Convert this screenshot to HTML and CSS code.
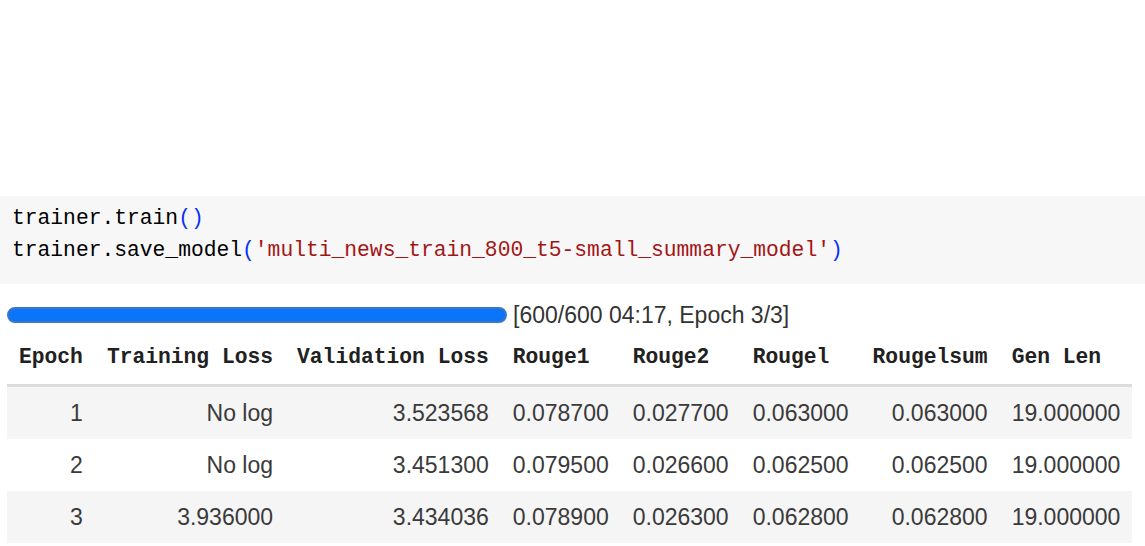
FILE: index.html
```html
<!DOCTYPE html>
<html>
<head>
<meta charset="utf-8">
<link rel="stylesheet" href="styles.css">
</head>
<body>
<div class="spacer"></div>
<div class="code">
<div class="line">trainer.train<span class="p">()</span></div>
<div class="line">trainer.save_model<span class="p">(</span><span class="s">'multi_news_train_800_t5-small_summary_model'</span><span class="p">)</span></div>
</div>
<div class="output">
<div class="progress-row">
<div class="bar"></div>
<span class="status">[600/600 04:17, Epoch 3/3]</span>
</div>
<table class="results">
<thead>
<tr><th>Epoch</th><th>Training Loss</th><th>Validation Loss</th><th>Rouge1</th><th>Rouge2</th><th>Rougel</th><th>Rougelsum</th><th>Gen Len</th></tr>
</thead>
<tbody>
<tr><td>1</td><td>No log</td><td>3.523568</td><td>0.078700</td><td>0.027700</td><td>0.063000</td><td>0.063000</td><td>19.000000</td></tr>
<tr><td>2</td><td>No log</td><td>3.451300</td><td>0.079500</td><td>0.026600</td><td>0.062500</td><td>0.062500</td><td>19.000000</td></tr>
<tr><td>3</td><td>3.936000</td><td>3.434036</td><td>0.078900</td><td>0.026300</td><td>0.062800</td><td>0.062800</td><td>19.000000</td></tr>
</tbody>
</table>
</div>
</body>
</html>
```
FILE: styles.css
```css
html, body {
  margin: 0;
  padding: 0;
  background: #ffffff;
}
.spacer {
  height: 196px;
}
.code {
  background: #f7f7f7;
  padding: 6px 12px 18px 12px;
  font-family: "Liberation Mono", "DejaVu Sans Mono", monospace;
  font-size: 21.3px;
  line-height: 32px;
  color: #000000;
}
.code .p {
  color: #0431fa;
}
.code .s {
  color: #a31515;
}
.output {
  padding: 0 0 0 7px;
}
.progress-row {
  display: flex;
  align-items: center;
  gap: 6px;
  height: 30px;
  padding-top: 16px;
}
.bar {
  width: 496px;
  height: 12px;
  border: 2px solid #3b77c9;
  border-radius: 9px;
  background: #0a75f8;
}
.status {
  font-family: "Liberation Sans", Arial, sans-serif;
  font-size: 23px;
  color: #333333;
}
.results {
  border-collapse: collapse;
  border-spacing: 0;
}
.results th {
  font-family: "Liberation Mono", "DejaVu Sans Mono", monospace;
  font-weight: bold;
  font-size: 21.3px;
  color: #212121;
  text-align: left;
  padding: 0 12px;
  height: 54px;
  vertical-align: middle;
  border-bottom: 3px solid #dcdcdc;
  white-space: nowrap;
}
.results td {
  font-family: "Liberation Sans", Arial, sans-serif;
  font-size: 23px;
  color: #3a3a3a;
  text-align: right;
  padding: 0 12px;
  height: 52px;
  vertical-align: middle;
  white-space: nowrap;
}
.results tbody tr:nth-child(odd) {
  background: #f5f5f5;
}
```
